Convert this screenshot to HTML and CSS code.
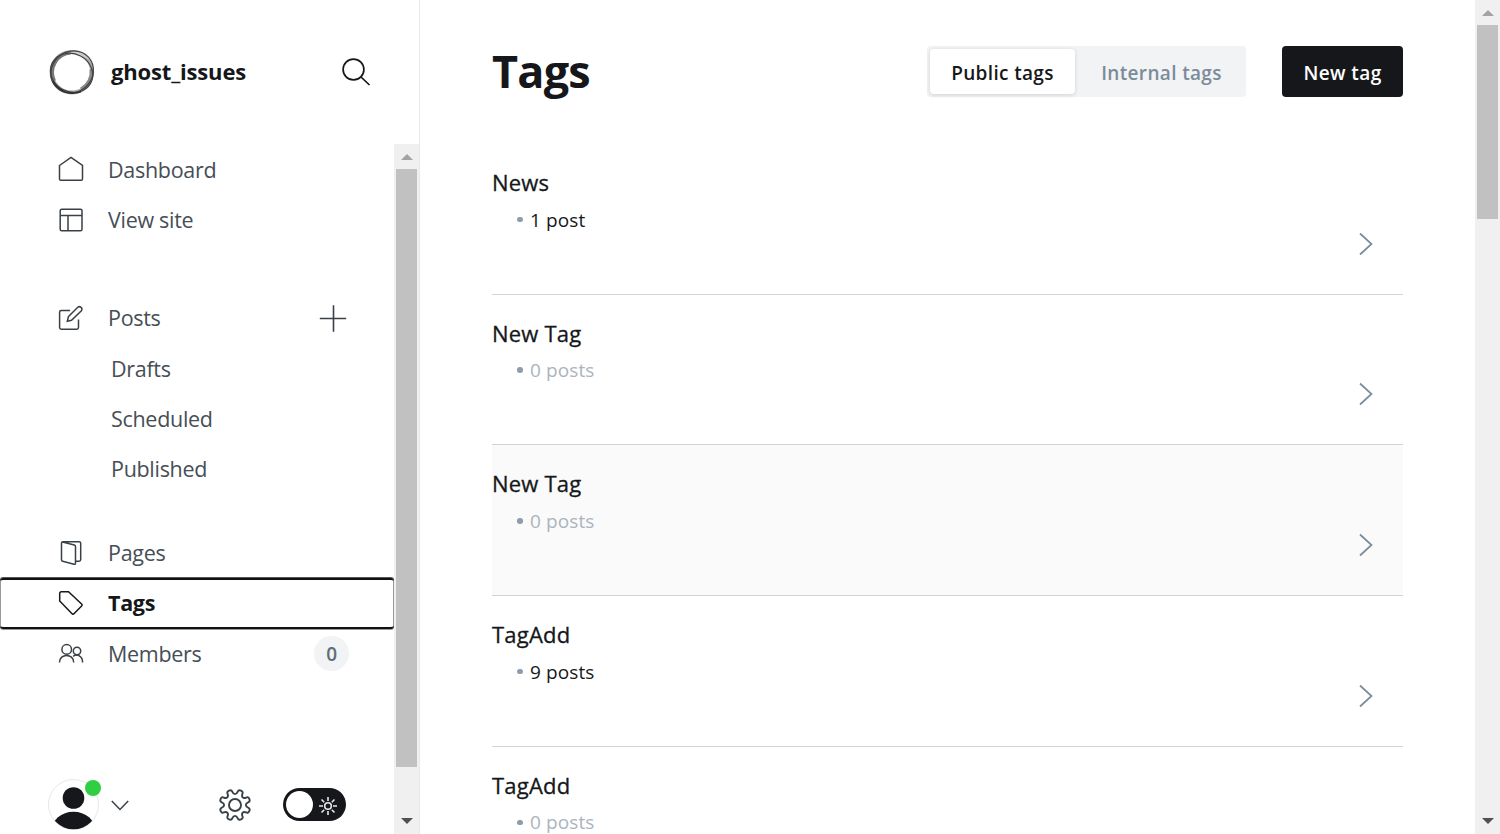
FILE: index.html
```
<!DOCTYPE html>
<html lang="en">
<head>
<meta charset="utf-8">
<title>Tags</title>
<link rel="stylesheet" href="styles.css">
</head>
<body>
<div class="app">
  <aside class="sidebar">
    <header class="site">
      <svg class="site-logo" width="46" height="46" viewBox="0 0 46 46">
        <circle cx="22.800" cy="23.200" r="20.300" stroke="#aaa" stroke-width="3.800"/>
        <path d="M22 3.500A20 20 0 0 0 5 32" stroke="#777" stroke-width="4"/>
        <path d="M42.500 20A20 20 0 0 1 32 40.500" stroke="#888" stroke-width="4"/>
        <path d="M18 4.500Q34-2 43.500 14 36 5 18 4.500Z" fill="#ccc"/>
        <ellipse cx="23" cy="22.800" rx="20.300" ry="22" transform="rotate(48 23 23)" stroke="#444" stroke-width="1.200"/>
        <ellipse cx="22.600" cy="23.800" rx="21.700" ry="19" transform="rotate(28 22.600 23.800)" stroke="#444" stroke-width="1.200"/>
        <path d="M4 32A22 22 0 0 0 32 42.500" stroke="#333" stroke-width="1.800"/>
      </svg>
      <span class="site-name">ghost_issues</span>
      <svg class="search" width="30" height="30" viewBox="0 0 30 30"><circle cx="12.500" cy="12.500" r="10.400"/><path d="M20 20l8.500 8"/></svg>
    </header>
    <div class="nav-area">
      <div class="nav-body">
        <nav class="nav">
          <a class="item"><svg class="icon" width="26" height="26" viewBox="0 0 26 26"><path d="M1.500 9.500 13 1.300 24.500 9.500V23q0 1.300-1.300 1.300H2.800Q1.500 24.300 1.500 23Z"/></svg><span class="label">Dashboard</span></a>
          <a class="item"><svg class="icon" width="26" height="26" viewBox="0 0 26 26"><rect x="2.200" y="2.200" width="21.800" height="21.500" rx="1.500"/><path d="M2 8.500h22M10 8.500v15"/></svg><span class="label">View site</span></a>
          <a class="item item-posts"><svg class="icon" width="26" height="26" viewBox="0 0 26 26"><path d="M12 5.500H3.300Q1.600 5.500 1.600 7.200V22.500Q1.600 24.200 3.300 24.200H18.800Q20.500 24.200 20.500 22.500V14.500M10.500 11.500 19.800 2.300Q21.300 .9 23 2.300T23.400 5.700L13.500 15.300 9.300 16.200Z"/></svg><span class="label">Posts</span>
            <svg class="plus" width="28" height="28" viewBox="0 0 28 28"><path d="M.8 14.500h26.400M14.500 1.300v26.400"/></svg></a>
          <a class="item sub"><span class="label">Drafts</span></a>
          <a class="item sub"><span class="label">Scheduled</span></a>
          <a class="item sub"><span class="label">Published</span></a>
          <a class="item item-pages"><svg class="icon" width="26" height="26" viewBox="0 0 26 26"><path d="M17.500 21.300H21Q22.700 21.300 22.700 19.600V3.200Q22.700 1.800 21 1.800H5Q3.500 1.800 3.500 3.300V19.800Q3.500 21 4.700 21.300L16 24.200Q17.500 24.500 17.500 23V6.500Q17.500 5.300 16.300 5L4.500 2"/></svg><span class="label">Pages</span></a>
          <a class="item active"><svg class="icon" width="26" height="26" viewBox="0 0 26 26"><path d="M1.700 3.500Q1.700 1.800 3.400 1.800H10.500L23.600 14Q24.700 15 23.600 16L16.200 23.500Q15 24.700 13.800 23.500L1.700 11Z"/></svg><span class="label">Tags</span></a>
          <a class="item item-members"><svg class="icon" width="26" height="26" viewBox="0 0 26 26"><circle cx="8.700" cy="8.400" r="4.800"/><circle cx="19" cy="10" r="3.700"/><path d="M1.500 21.500C1.500 12 15.700 12 15.700 21.500M15.200 15.300C19 12.500 24.600 15 24.600 21.500"/></svg><span class="label">Members</span><span class="badge">0</span></a>
        </nav>
        <footer class="user-bar">
          <div class="avatar">
            <svg width="51" height="51" viewBox="0 0 51 51"><defs><clipPath id="disc"><circle cx="25.500" cy="25.500" r="24.800"/></clipPath></defs><circle cx="25.500" cy="25.500" r="25" fill="#fff" stroke="#e4e7ea"/><g fill="#15171a" clip-path="url(#disc)"><circle cx="25.500" cy="19" r="10.800"/><ellipse cx="25.500" cy="52" rx="22" ry="19.300"/></g></svg>
            <span class="online"></span>
          </div>
          <svg class="caret" width="18" height="11" viewBox="0 0 18 11"><path d="M.8 1 9 9.500 17.200 1"/></svg>
          <svg class="gear" width="32" height="32" viewBox="-16 -16 32 32"><circle r="6"/>
            <defs><path id="teeth" d="M0-10.900Q1.700-10.900 2.600-13.150 3.550-15.400 5.960-14.400 8.370-13.400 7.420-11.150 6.470-8.900 7.700-7.700 8.900-6.470 11.150-7.420 13.400-8.370 14.400-5.960 15.400-3.550 13.150-2.600 10.900-1.700 10.900 0"/></defs>
            <use href="#teeth"/><use href="#teeth" transform="rotate(90)"/><use href="#teeth" transform="rotate(180)"/><use href="#teeth" transform="rotate(270)"/></svg>
          <div class="switch"><span class="knob"></span><svg width="20" height="20" viewBox="0 0 20 20"><circle cx="10" cy="10" r="3.300"/><path d="M10 1v4M10 15v4M1 10h4M15 10h4M3.500 3.500l2.700 2.700M13.800 13.800l2.700 2.700M16.500 3.500l-2.700 2.700M6.200 13.800l-2.700 2.700"/></svg></div>
        </footer>
      </div>
      <div class="scrollbar">
        <svg class="arrow" width="12" height="6" viewBox="0 0 12 6"><path fill="#a3a3a3" d="M0 6 6 0l6 6Z"/></svg>
        <div class="thumb nav-thumb"></div>
        <svg class="arrow" width="12" height="6" viewBox="0 0 12 6"><path fill="#505050" d="M0 0h12L6 6Z"/></svg>
      </div>
    </div>
  </aside>
  <main class="main">
    <header class="head">
      <h1 class="title">Tags</h1>
      <div class="tabs"><button class="tab selected">Public tags</button><button class="tab">Internal tags</button></div>
      <button class="new">New tag</button>
    </header>
    <section class="list">
      <article class="row"><div><h3 class="name">News</h3><p class="count used"><i class="dot"></i>1 post</p></div><svg class="chev" width="14" height="24" viewBox="0 0 14 24"><path d="M1 1.500 12.500 12 1 22.500"/></svg></article>
      <article class="row"><div><h3 class="name">New Tag</h3><p class="count"><i class="dot"></i>0 posts</p></div><svg class="chev" width="14" height="24" viewBox="0 0 14 24"><path d="M1 1.500 12.500 12 1 22.500"/></svg></article>
      <article class="row hovered"><div><h3 class="name">New Tag</h3><p class="count"><i class="dot"></i>0 posts</p></div><svg class="chev" width="14" height="24" viewBox="0 0 14 24"><path d="M1 1.500 12.500 12 1 22.500"/></svg></article>
      <article class="row"><div><h3 class="name">TagAdd</h3><p class="count used"><i class="dot"></i>9 posts</p></div><svg class="chev" width="14" height="24" viewBox="0 0 14 24"><path d="M1 1.500 12.500 12 1 22.500"/></svg></article>
      <article class="row"><div><h3 class="name">TagAdd</h3><p class="count"><i class="dot"></i>0 posts</p></div><svg class="chev" width="14" height="24" viewBox="0 0 14 24"><path d="M1 1.500 12.500 12 1 22.500"/></svg></article>
    </section>
  </main>
  <div class="scrollbar">
    <svg class="arrow" width="12" height="6" viewBox="0 0 12 6"><path fill="#a3a3a3" d="M0 6 6 0l6 6Z"/></svg>
    <div class="thumb page-thumb"></div>
    <svg class="arrow" width="12" height="6" viewBox="0 0 12 6"><path fill="#505050" d="M0 0h12L6 6Z"/></svg>
  </div>
</div>
</body>
</html>
```
FILE: styles.css
```
* { box-sizing: border-box; }
body { margin: 0; background: #fff; color: #15171a; font-family: "Open Sans", "Noto Sans", sans-serif; overflow: hidden; }
h1, h3, p { margin: 0; }
svg { display: block; flex: none; fill: none; }
button { border: 0; padding: 0; font: inherit; }
.app { display: flex; width: 1500px; height: 834px; overflow: hidden; }

.sidebar { display: flex; flex-direction: column; flex: none; width: 420px; border-right: 1px solid #e6e9eb; }
.site { display: flex; align-items: center; height: 144px; padding: 0 49px; }
.site-name { margin-left: 16px; padding-bottom: 2px; font-size: 22px; font-weight: 700; letter-spacing: -.17px; }
.search { margin: 0 -.500px 0 auto; stroke: #15171a; stroke-width: 1.700; }
.nav-area { display: flex; flex: 1; min-height: 0; }
.nav-body { display: flex; flex-direction: column; flex: 1; }
.nav { display: flex; flex-direction: column; padding-top: 1px; }
.item { display: flex; align-items: center; height: 50.200px; padding: 0 45px 0 58px; font-size: 21.500px; letter-spacing: -.3px; color: #464e56; }
.label { padding-bottom: 2px; }
.icon { margin-right: 24px; stroke: #394047; stroke-width: 1.500; }
.item:first-child .icon { margin-bottom: 2px; }
.item-posts { margin-top: 48px; }
.sub { padding-left: 111px; }
.sub .label, .item-members .label { padding-bottom: 1px; }
.item-pages { margin-top: 34px; }
.plus { margin: 0 2px 0 auto; stroke: #394047; stroke-width: 1.600; }
.active { color: #15171a; font-weight: 700; border-radius: 3px; box-shadow: inset 0 0 0 1px #999, 0 -1px 0 1px #111, 0 1px 0 0 #111, inset 0 -1px 0 1px #111; }
.active { border-radius: 3px; border: solid #111; border-width: 2px 0; box-shadow: inset 1px 0 #999, inset -1px 0 #999, 0 -1px 0 0 #555, 0 1px 0 0 #999; }
.active .icon { stroke: #15171a; }
.badge { width: 35px; height: 35px; margin-left: auto; padding-top: 1px; border-radius: 50%; background: #f1f3f4; color: #626d79; font-size: 19px; font-weight: 600; line-height: 35px; text-align: center; }

.user-bar { display: flex; align-items: center; height: 51px; margin-top: auto; margin-bottom: 4px; padding-left: 48px; }
.avatar { position: relative; }
.online { position: absolute; top: 1px; right: -2px; width: 16px; height: 16px; border-radius: 50%; background: #30cf43; }
.caret { margin: 2px 0 0 12px; stroke: #394047; stroke-width: 1.500; }
.gear { margin-left: 90px; stroke: #394047; stroke-width: 1.900; }
.switch { display: flex; align-items: center; gap: 5px; width: 63px; height: 33px; margin-left: 32px; padding-left: 3px; border-radius: 17px; background: #15171a; }
.switch svg { margin-top: 2px; stroke: #e5e9ed; stroke-width: 1.600; }
.knob { width: 27px; height: 27px; border-radius: 50%; background: #fff; }

.scrollbar { display: flex; flex-direction: column; align-items: center; flex: none; width: 25px; padding: 10px 0; background: #f0f0f0; }
.thumb { width: 21px; margin-top: 9px; background: #c1c1c1; }
.nav-thumb { height: 598px; }
.page-thumb { height: 194px; }
.scrollbar .arrow:last-child { margin-top: auto; }

.main { flex: 1; padding: 0 72px; }
.head { display: flex; align-items: center; height: 143px; margin-bottom: 1px; }
.title { margin-right: auto; padding-bottom: 1px; font-size: 45px; font-weight: 700; line-height: 60px; letter-spacing: -.8px; }
.tabs { display: flex; width: 319px; height: 51px; padding: 3px; border-radius: 4px; background: #f1f3f4; }
.tab { flex: 1; padding: 3px 0 0 5px; background: none; color: #7c8b9a; font-size: 19px; font-weight: 600; letter-spacing: .35px; }
.tab.selected { flex: none; width: 145px; padding-left: 0; border-radius: 4px; background: #fff; color: #15171a; box-shadow: 0 1px 4px rgba(0, 0, 0, .14); }
.new { width: 121px; height: 51px; margin-left: 36px; padding-top: 3px; border-radius: 4px; background: #15171a; color: #fff; font-size: 19px; font-weight: 600; letter-spacing: .4px; }
.row { display: flex; align-items: center; justify-content: space-between; height: 150.700px; padding-right: 30px; border-bottom: 1px solid #ced4d9; }
.row > div { align-self: stretch; padding-top: 22px; }
.name { font-size: 22px; font-weight: 500; line-height: 32px; letter-spacing: .2px; -webkit-text-stroke: .3px currentColor; }
.count { display: flex; align-items: center; margin-top: 6.500px; padding-left: 25px; color: #abb4be; font-size: 19px; line-height: 30px; letter-spacing: .1px; }
.count.used { color: #15171a; }
.dot { width: 5.500px; height: 5.500px; margin-right: 7.500px; border-radius: 50%; background: #8e9cac; }
.hovered { background: #fafafa; }
.chev { margin-top: 49.500px; stroke: #7c8b9a; stroke-width: 1.700; }
```
